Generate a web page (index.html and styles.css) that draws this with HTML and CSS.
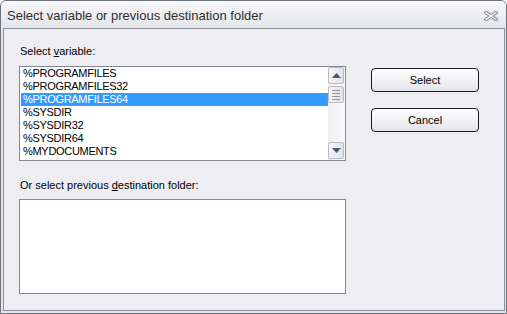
FILE: index.html
```html
<!DOCTYPE html>
<html>

<head>
    <title>Select variable or previous destination folder</title>
    <link rel="stylesheet" href="styles.css">
</head>

<body>
    <div class="window">
        <div class="titlebar">
            <span class="title">Select variable or previous destination folder</span>
            <svg class="close" width="14" height="10" viewBox="0 0 14 10">
                <path d="M2 1.5 L12 8.5 M12 1.5 L2 8.5" stroke="#85888f" stroke-width="3.6" stroke-linecap="square" fill="none"/>
                <path d="M2 1.5 L12 8.5 M12 1.5 L2 8.5" stroke="#ffffff" stroke-width="1.4" stroke-linecap="square" fill="none"/>
            </svg>
        </div>
        <div class="client">
            <div class="top-row">
                <div class="field">
                    <label class="caption">Select <u>v</u>ariable:</label>
                    <div class="listbox">
                        <ul class="items">
                            <li>%PROGRAMFILES</li>
                            <li>%PROGRAMFILES32</li>
                            <li class="selected">%PROGRAMFILES64</li>
                            <li>%SYSDIR</li>
                            <li>%SYSDIR32</li>
                            <li>%SYSDIR64</li>
                            <li>%MYDOCUMENTS</li>
                        </ul>
                        <div class="scrollbar">
                            <div class="sb-btn">
                                <svg width="9" height="5" viewBox="0 0 9 5"><path d="M4.5 0 L9 5 L0 5 Z" fill="#4b5671"/></svg>
                            </div>
                            <div class="sb-thumb">
                                <span></span><span></span><span></span><span></span>
                            </div>
                            <div class="sb-track"></div>
                            <div class="sb-btn">
                                <svg width="9" height="5" viewBox="0 0 9 5"><path d="M0 0 L9 0 L4.5 5 Z" fill="#4b5671"/></svg>
                            </div>
                        </div>
                    </div>
                </div>
                <div class="buttons">
                    <button type="button">Select</button>
                    <button type="button">Cancel</button>
                </div>
            </div>

            <label class="caption second">Or select previous <u>d</u>estination folder:</label>
            <div class="listbox empty"></div>
        </div>
    </div>
</body>

</html>
```

FILE: styles.css
```css
body {
    margin: 0;
    padding: 0;
    font-family: "Liberation Sans", Arial, sans-serif;
    background-color: #ffffff;
}

.window {
    width: 507px;
    height: 314px;
    box-sizing: border-box;
    border: 1px solid #6e737a;
    border-radius: 6px 6px 0 0;
    background-color: #e6e7ec;
    display: flex;
    flex-direction: column;
}

.titlebar {
    height: 27px;
    flex: none;
    display: flex;
    align-items: center;
    justify-content: space-between;
    padding: 0 8px 0 6px;
    border-radius: 5px 5px 0 0;
    background: linear-gradient(#f8f8fa, #e4e5ea);
}

.title {
    font-size: 13px;
    color: #2e2e2e;
    padding-top: 2px;
}

.close {
    display: block;
    margin-top: 2px;
}

.client {
    flex: 1;
    margin: 0 1px 2px 2px;
    border: 1px solid #8b9097;
    background-color: #eeedf2;
    padding: 16px 0 0 15px;
}

.top-row {
    display: flex;
    gap: 25px;
}

.caption {
    display: block;
    font-size: 11px;
    line-height: 13px;
    color: #000000;
    padding-left: 1px;
    margin-bottom: 8px;
}

.caption.second {
    margin-top: 18px;
    margin-bottom: 7px;
}

.listbox {
    width: 327px;
    height: 95px;
    box-sizing: border-box;
    border: 1px solid #828790;
    background-color: #ffffff;
    display: flex;
}

.items {
    list-style: none;
    margin: 0;
    padding: 0 0 0 1px;
    flex: 1;
}

.items li {
    height: 13px;
    line-height: 13px;
    font-size: 11px;
    letter-spacing: -0.3px;
    padding-left: 2px;
    color: #000000;
    box-sizing: border-box;
}

.items li.selected {
    background-color: #3399ff;
    color: #ffffff;
    outline: 1px dotted #e07b1c;
    outline-offset: -1px;
}

.scrollbar {
    width: 17px;
    display: flex;
    flex-direction: column;
    background: linear-gradient(to right, #efeff2, #fbfbfc);
    padding: 0 1px 1px 0;
    box-sizing: border-box;
}

.sb-btn,
.sb-thumb {
    height: 17px;
    box-sizing: border-box;
    border: 1px solid #b9bbc2;
    border-radius: 2px;
    background: linear-gradient(to right, #f4f4f6, #e2e3e8);
    display: flex;
    align-items: center;
    justify-content: center;
}

.sb-thumb {
    margin-top: 2px;
    flex-direction: column;
    gap: 2px;
}

.sb-thumb span {
    display: block;
    width: 8px;
    height: 1px;
    background-color: #8e929a;
}

.sb-track {
    flex: 1;
}

.buttons {
    display: flex;
    flex-direction: column;
    gap: 16px;
    padding-top: 23px;
}

button {
    width: 108px;
    height: 24px;
    border: 1px solid #1c1c1c;
    border-radius: 4px;
    background: linear-gradient(#ffffff, #e4e4ec);
    font-family: "Liberation Sans", Arial, sans-serif;
    font-size: 11px;
    color: #000000;
    padding: 0;
}
```
